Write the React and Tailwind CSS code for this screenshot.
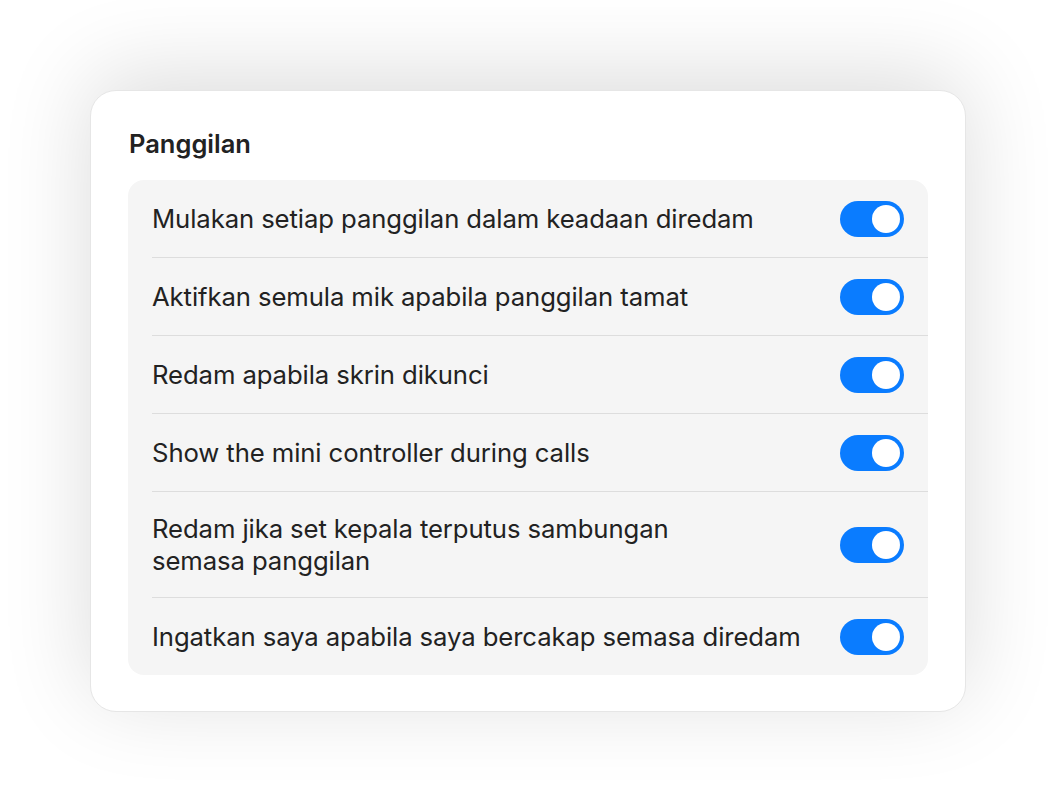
import React, { useState } from 'react';

const items = [
    { id: 'muted-start', label: 'Mulakan setiap panggilan dalam keadaan diredam' },
    { id: 'unmute-end', label: 'Aktifkan semula mik apabila panggilan tamat' },
    { id: 'mute-lock', label: 'Redam apabila skrin dikunci' },
    { id: 'mini-controller', label: 'Show the mini controller during calls' },
    { id: 'headset', label: 'Redam jika set kepala terputus sambungan semasa panggilan', narrow: true },
    { id: 'remind', label: 'Ingatkan saya apabila saya bercakap semasa diredam' },
];

const Toggle = ({ on, onClick }) => (
    <button
        onClick={onClick}
        className={`relative shrink-0 w-16 h-9 rounded-full transition-colors ${on ? 'bg-[#0a7cff]' : 'bg-[#d9d9d9]'}`}
    >
        <span className={`absolute top-1 w-7 h-7 rounded-full bg-white transition-all ${on ? 'left-8' : 'left-1'}`} />
    </button>
);

const App = () => {
    const [state, setState] = useState(() => Object.fromEntries(items.map(i => [i.id, true])));

    return (
        <div className="min-h-screen bg-white flex items-center justify-center font-['Inter','Liberation_Sans',sans-serif] text-[#222222]">
            <div className="w-[876px] h-[622px] bg-white rounded-[26px] border border-[#e6e6e6] shadow-[0_-14px_90px_rgba(0,0,0,0.14)] pt-[37px] px-[37px]">
                <h2 className="text-[25.5px] font-semibold leading-[32px] ml-[1px] mb-[20px]">Panggilan</h2>

                <div className="bg-[#f5f5f5] rounded-[16px] overflow-hidden">
                    {items.map((item, idx) => (
                        <div key={item.id} className="pl-6">
                            {/* separator starts at text edge, runs to the right edge */}
                            <div className={`flex items-center justify-between pr-6 py-[20.5px] ${idx > 0 ? 'border-t border-[#dddddd]' : ''}`}>
                                <span className={`text-[25.7px] leading-[32px] tracking-[-0.1px] ${item.narrow ? 'max-w-[600px]' : ''}`}>{item.label}</span>
                                <Toggle on={state[item.id]} onClick={() => setState(s => ({ ...s, [item.id]: !s[item.id] }))} />
                            </div>
                        </div>
                    ))}
                </div>
            </div>
        </div>
    );
};

export default App;
